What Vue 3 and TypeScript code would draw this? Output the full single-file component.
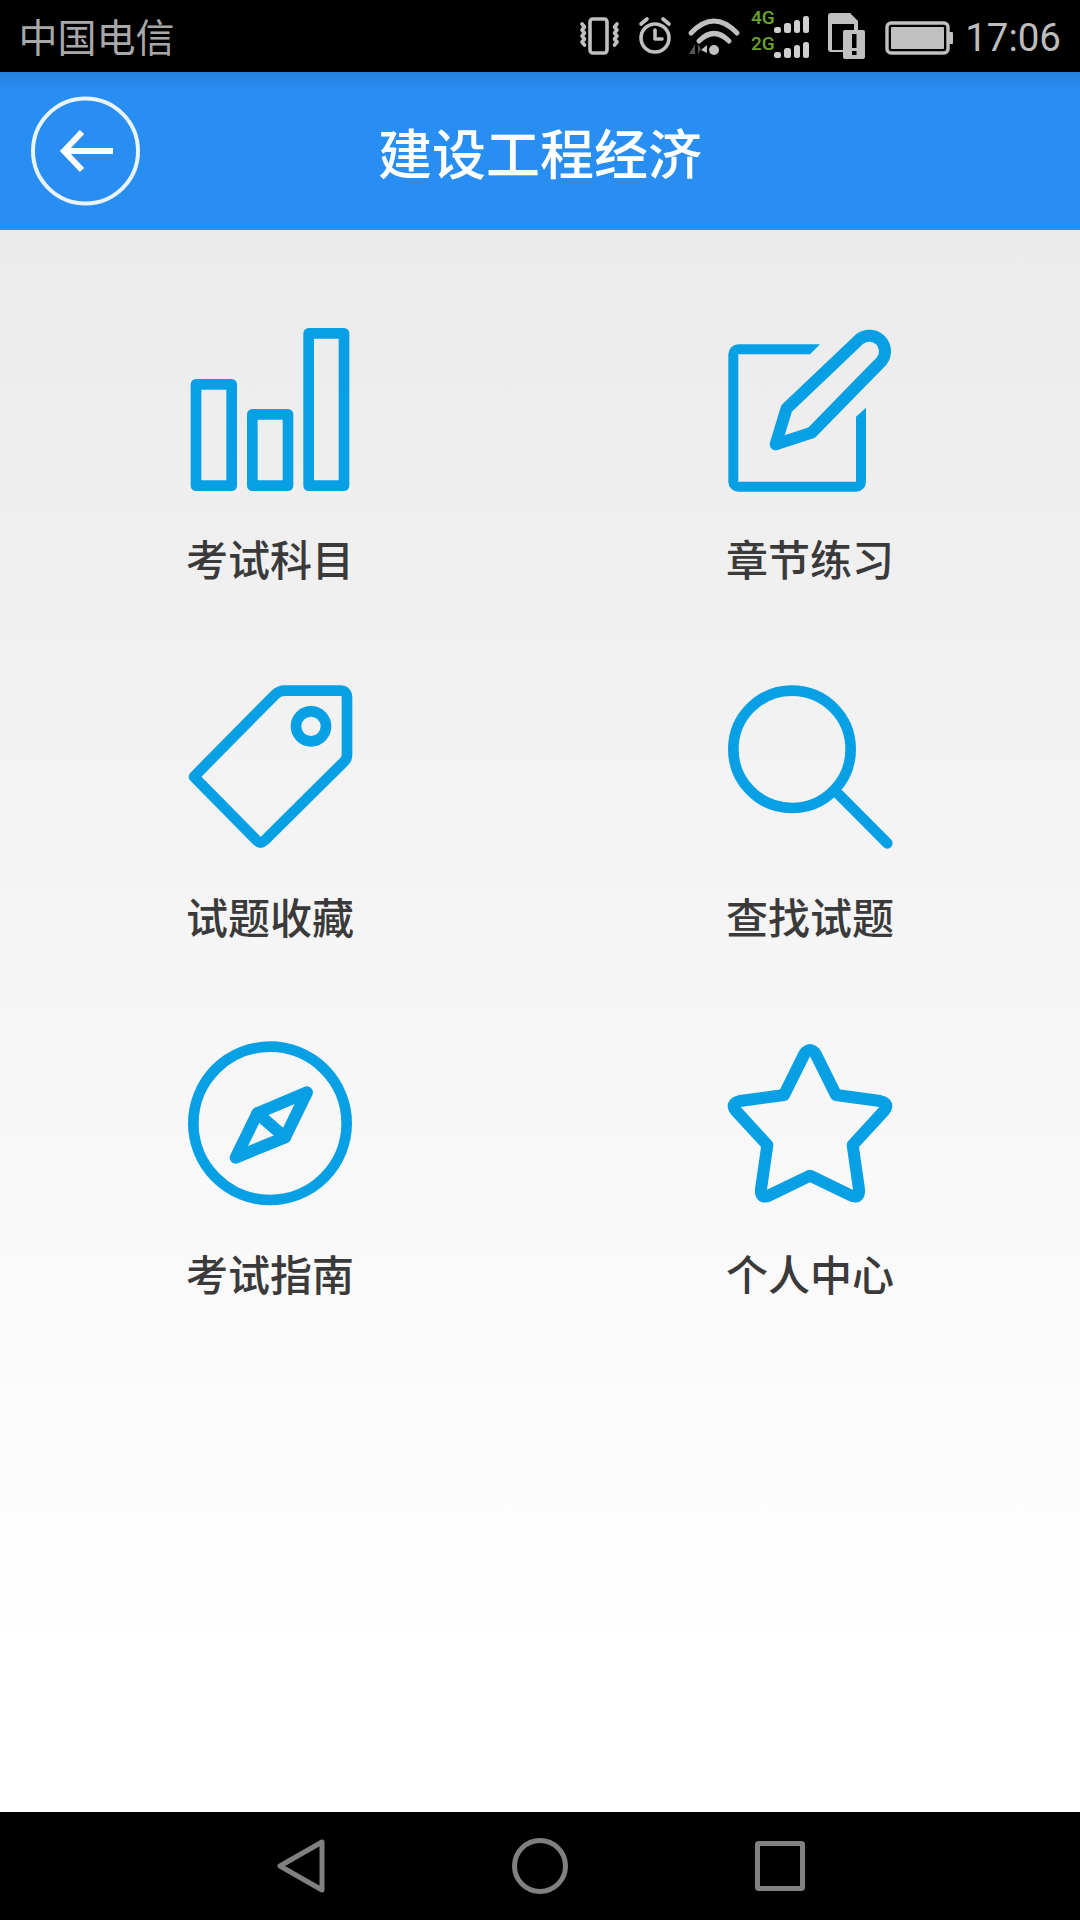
<script setup lang="ts">
interface Shape { d: string; solid?: boolean; heavy?: boolean }
interface Entry { label: string; top: number; shapes: Shape[] }

const entries: Entry[] = [
  { label: '考试科目', top: 30, shapes: [
    { d: 'M78 223H185V527H78Z' },
    { d: 'M247 313H354V527H247Z' },
    { d: 'M416 70H522V527H416Z' },
  ] },
  { label: '章节练习', top: 30, shapes: [
    { solid: true, d: 'M330 103H85A30 30 0 0 0 55 133V515A30 30 0 0 0 85 545H438A30 30 0 0 0 468 515V293L438 320V515H85V133H300Z' },
    { heavy: true, d: 'M230 295L449 87A47 47 0 0 1 515 153L305 368L197 403Z' },
  ] },
  { label: '试题收藏', top: 22, shapes: [
    { d: 'M72 318L315 72Q327 60 345 60H510Q531 60 531 81V252Q531 264 522 273L283 510Q272 520 261 510Z' },
    { d: 'M378 167A45 45 0 1 0 468 167A45 45 0 1 0 378 167Z' },
  ] },
  { label: '查找试题', top: 22, shapes: [
    { d: 'M70 236A176 176 0 1 0 422 236A176 176 0 1 0 70 236Z' },
    { d: 'M385 370L532 518' },
  ] },
  { label: '考试指南', top: 15, shapes: [
    { d: 'M70 280A230 230 0 1 0 530 280A230 230 0 1 0 70 280Z' },
    { heavy: true, d: 'M411 187L262 250L197 383L345 322Z' },
    { heavy: true, d: 'M262 250L345 322' },
  ] },
  { label: '个人中心', top: 15, shapes: [
    { heavy: true, d: 'M222 195L283 72Q300 48 317 72L378 195L510 213Q542 220 520 245L428 345L447 478Q450 510 420 495L300 437L180 495Q150 510 153 478L172 345L80 245Q58 220 90 213Z' },
  ] },
]

function shapeClass(shape: Shape): string {
  if (shape.solid) return 'solid'
  return shape.heavy ? 'line heavy' : 'line'
}
</script>

<template>
  <div class="screen">
    <div class="status">
      <span class="carrier">中国电信</span>
      <div class="status-right">
        <svg class="status-icons" width="376" height="72" viewBox="578 0 376 72">
          <g fill="none" stroke="#c0c0c0" stroke-width="3.6" stroke-linecap="round" stroke-linejoin="round">
            <rect x="589" y="19" width="17" height="34" rx="3" />
            <path d="M581 24l2.500 3-2.500 3 2.500 3-2.500 3 2.500 3-2.500 3 2.500 3" />
            <path d="M616 24l-2.500 3 2.500 3-2.500 3 2.500 3-2.500 3 2.500 3-2.500 3" />
            <circle cx="654" cy="38" r="14" />
            <path d="M654 30v9h7" />
            <path d="M640 24l6-5M668 24l-6-5" />
          </g>
          <g fill="none" stroke="#c0c0c0" stroke-width="5" stroke-linecap="round">
            <path d="M690 33Q713 9 736 33" />
            <path d="M698 41Q713 26 728 41" />
          </g>
          <circle cx="713" cy="50" r="5" fill="#c0c0c0" />
          <path d="M706 45l-6 5 6 3Z" fill="#c0c0c0" />
          <path d="M694 44v10h-6l6-10ZM697 44l3 5-3 5Z" fill="#555" />
          <text x="750" y="24" class="net">4G</text>
          <text x="750" y="50" class="net">2G</text>
          <g fill="#cfcfcf">
            <rect x="773" y="27" width="7" height="6" rx="2.5" />
            <rect x="783" y="23" width="7" height="10" rx="2.5" />
            <rect x="793" y="20" width="6" height="13" rx="2.5" />
            <rect x="802" y="16" width="6" height="17" rx="2.5" />
            <rect x="773" y="52" width="7" height="6" rx="2.5" />
            <rect x="783" y="48" width="7" height="10" rx="2.5" />
            <rect x="793" y="45" width="6" height="13" rx="2.5" />
            <rect x="802" y="42" width="6" height="16" rx="2.5" />
          </g>
          <path d="M830 13H849L857 21V30H842V52H830Q827 52 827 49V16Q827 13 830 13Z" fill="#c0c0c0" />
          <rect x="831" y="24" width="22" height="26" fill="#000" />
          <rect x="842" y="30" width="22" height="29" rx="2" fill="#c0c0c0" />
          <rect x="851" y="34" width="4.5" height="14" fill="#000" />
          <rect x="851" y="51" width="4.5" height="4" fill="#000" />
          <rect x="886" y="23" width="61" height="30" rx="4" fill="none" stroke="#c0c0c0" stroke-width="3.4" />
          <rect x="890" y="27" width="53" height="22" rx="1" fill="#c0c0c0" />
          <rect x="948" y="32" width="4" height="12" rx="1" fill="#c0c0c0" />
        </svg>
        <span class="clock">17:06</span>
      </div>
    </div>

    <header class="bar">
      <button class="back" type="button" aria-label="返回">
        <svg width="112" height="112" viewBox="0 0 112 112">
          <circle cx="56.5" cy="56" r="52.5" fill="none" stroke="#fff" stroke-opacity="0.9" stroke-width="4" />
          <path d="M84 56H36M53 37L35 56L53 75" fill="none" stroke="#fff" stroke-width="6" />
        </svg>
      </button>
      <h1 class="title">建设工程经济</h1>
    </header>

    <main class="content">
      <div class="grid">
        <div v-for="entry in entries" :key="entry.label" class="cell">
          <svg class="glyph" width="200" height="180" :viewBox="`0 ${entry.top} 600 540`">
            <path
              v-for="(shape, i) in entry.shapes"
              :key="i"
              :d="shape.d"
              :class="shapeClass(shape)"
            />
          </svg>
          <span class="label">{{ entry.label }}</span>
        </div>
      </div>
    </main>

    <nav class="nav">
      <svg width="48" height="54" viewBox="0 0 48 54">
        <path d="M3 27L45 3V51Z" class="nav-line" />
      </svg>
      <svg width="56" height="56" viewBox="0 0 56 56">
        <circle cx="28" cy="28" r="25.5" class="nav-line" />
      </svg>
      <svg width="50" height="50" viewBox="0 0 50 50">
        <rect x="2.5" y="2.5" width="45" height="45" rx="1" class="nav-line" />
      </svg>
    </nav>
  </div>
</template>

<style>
html, body { margin: 0; padding: 0; background: #000; }
</style>

<style scoped>
.screen {
  width: 1080px;
  height: 1920px;
  display: flex;
  flex-direction: column;
  font-family: "Noto Sans CJK SC", "Noto Sans", sans-serif;
  overflow: hidden;
}
.status {
  height: 72px;
  flex: none;
  background: #000;
  display: flex;
  align-items: center;
  justify-content: space-between;
  padding: 0 19px 0 18.5px;
  box-sizing: border-box;
}
.carrier {
  font-size: 39px;
  font-weight: 400;
  color: #a8a8a8;
  position: relative;
  top: -1px;
}
.status-right {
  display: flex;
  align-items: center;
}
.status-icons { display: block; }
.net {
  font-family: Roboto, sans-serif;
  font-size: 19px;
  font-weight: 500;
  fill: #6aa32c;
}
.clock {
  font-family: Roboto, sans-serif;
  font-size: 38.5px;
  font-weight: 400;
  color: #bdbdbd;
  margin-left: 10px;
  position: relative;
  top: 1px;
}
.bar {
  height: 158px;
  flex: none;
  display: grid;
  grid-template-columns: 1fr auto 1fr;
  align-items: center;
  background: linear-gradient(#2580dc 0, #288ef2 18px, #288ef2 100%);
  padding-left: 29px;
  box-sizing: border-box;
}
.back {
  width: 112px;
  height: 112px;
  padding: 0;
  border: 0;
  background: none;
  display: block;
}
.back svg { display: block; }
.title {
  margin: 0 0 0 -29px;
  font-size: 54px;
  font-weight: 500;
  color: #fff;
  line-height: 1;
  position: relative;
  top: 1px;
}
.content {
  flex: 1;
  background: linear-gradient(#ebebeb 0, #ffffff 90%);
  padding-top: 90px;
  box-sizing: border-box;
}
.grid {
  display: grid;
  grid-template-columns: 540px 540px;
  row-gap: 89.5px;
}
.cell {
  display: flex;
  flex-direction: column;
  align-items: center;
}
.glyph { display: block; }
.line {
  fill: none;
  stroke: #07a0e5;
  stroke-width: 32;
  stroke-linejoin: round;
  stroke-linecap: round;
}
.heavy { stroke-width: 36; }
.solid { fill: #07a0e5; }
.label {
  margin-top: 28px;
  font-size: 42px;
  line-height: 60px;
  font-weight: 500;
  color: #3a3a3a;
}
.nav {
  height: 108px;
  flex: none;
  background: #000;
  display: flex;
  align-items: center;
  justify-content: center;
  gap: 187px;
  padding-left: 2px;
  box-sizing: border-box;
}
.nav svg { display: block; }
.nav-line {
  fill: none;
  stroke: #808080;
  stroke-width: 5;
  stroke-linejoin: round;
}
</style>
